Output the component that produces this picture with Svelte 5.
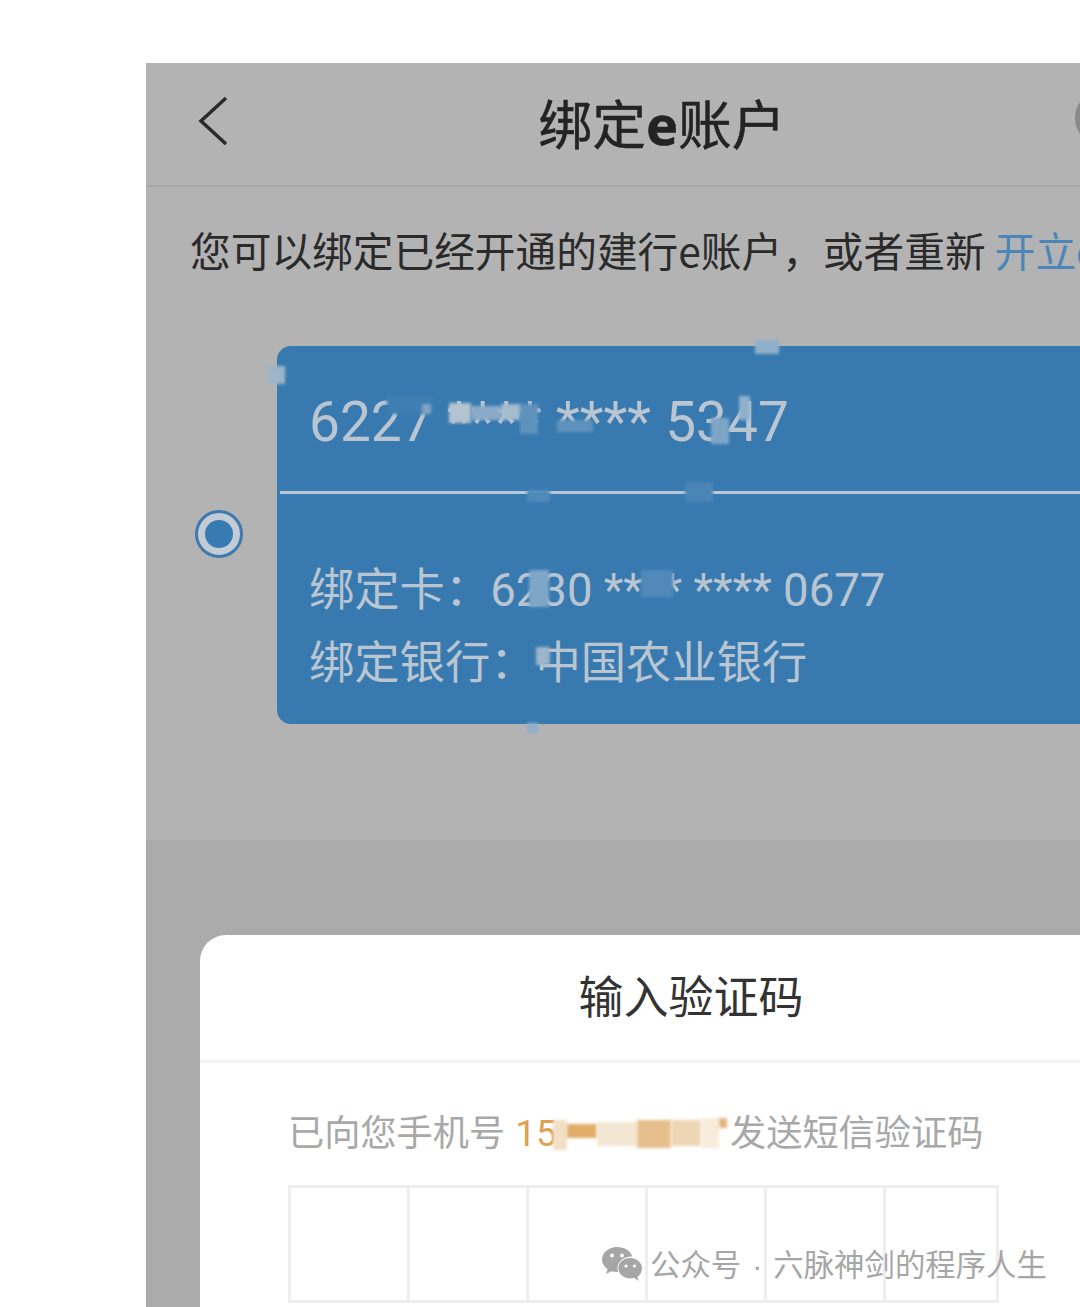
<script>
  // blur blocks that hide parts of the numbers, [x, y, w, h, colour] relative to the card
  const cardPatches = [
    [-9, 20, 17, 18, '#9db5c9'],
    [478, -6, 24, 14, '#8fb0cb'],
    [110, 50, 46, 18, '#3f7eb2'],
    [145, 58, 9, 10, '#7fa5c6'],
    [172, 57, 22, 20, '#b4c3d0'],
    [194, 60, 30, 14, '#8aabc8'],
    [224, 58, 20, 16, '#a5bccf'],
    [243, 58, 18, 30, '#5e92bc'],
    [280, 74, 36, 12, '#5e92bc'],
    [434, 72, 18, 26, '#7ea6c6'],
    [462, 50, 11, 24, '#8fb0cb'],
    [250, 144, 23, 12, '#4f8aba'],
    [408, 136, 28, 20, '#4a86b7'],
    [252, 224, 20, 37, '#7ea6c6'],
    [364, 224, 32, 27, '#4f8aba'],
    [259, 301, 14, 18, '#9db5c9'],
    [250, 377, 11, 10, '#8fb0cb']
  ];
  const phonePatches = [
    [0, 8, 14, 30, '#f2e0c6'],
    [14, 12, 30, 14, '#e0ae6a'],
    [44, 10, 40, 24, '#f3e6d2'],
    [84, 8, 34, 28, '#e6c08c'],
    [118, 8, 30, 26, '#eed6b4'],
    [148, 6, 18, 30, '#f7ecdc'],
    [166, 6, 8, 10, '#e3b880']
  ];
  const cells = [1, 2, 3, 4, 5, 6];
</script>

<div class="page">
  <section class="phone">
    <header class="nav">
      <svg class="back" viewBox="0 0 32 50" width="32" height="50" aria-hidden="true">
        <path d="M29 2 L4 25 L29 48" fill="none" stroke="#2b2b2b" stroke-width="3.500" />
      </svg>
      <h1>绑定<b>e</b>账户</h1>
      <span class="help"></span>
    </header>

    <div class="content">
      <p class="intro">您可以绑定已经开通的建行e账户，或者重新 <span>开立e账户</span></p>
      <div class="row">
        <span class="radio"><span></span></span>
        <div class="card">
          <div class="card-no">6227 **** **** 5347</div>
          <div class="card-info">
            <p class="bound">绑定卡：<span>6230 **** **** 0677</span></p>
            <p>绑定银行：中国农业银行</p>
          </div>
          {#each cardPatches as [x, y, w, h, c]}
            <i class="patch" style="left:{x}px;top:{y}px;width:{w}px;height:{h}px;background:{c}"></i>
          {/each}
        </div>
      </div>
    </div>

    <div class="lower">
      <div class="modal">
        <h2>输入验证码</h2>
        <div class="modal-body">
          <p class="sent">已向您手机号 <span class="tel">15
            {#each phonePatches as [x, y, w, h, c]}
              <i class="patch" style="left:{x + 38}px;top:{y}px;width:{w}px;height:{h}px;background:{c}"></i>
            {/each}
          </span> 发送短信验证码</p>
          <div class="code">
            {#each cells as n}
              <span data-n={n}></span>
            {/each}
          </div>
        </div>
      </div>
    </div>
  </section>

  <div class="mark">
    <svg viewBox="0 0 42 36" width="42" height="36" aria-hidden="true">
      <path d="M16 1C7.600 1 1 6.700 1 13.600c0 4 2.200 7.400 5.600 9.700L5 28l5.400-2.800c1.800.5 3.700.8 5.600.8h1.100c-.4-1.200-.6-2.400-.6-3.600 0-6.600 6.200-11.800 13.700-11.800h1.100C29.900 5 23.500 1 16 1z" fill="#a6a6a6" />
      <path d="M41 22.200c0-5.700-5.500-10.200-11.800-10.200-6.600 0-11.900 4.500-11.900 10.200s5.300 10.200 11.900 10.200c1.400 0 2.700-.2 3.900-.6L37.500 35l-1.100-4.100c2.800-2 4.600-5 4.600-8.700z" fill="#a6a6a6" />
      <circle cx="11" cy="9.500" r="1.900" fill="#fff" />
      <circle cx="21" cy="9.500" r="1.900" fill="#fff" />
      <circle cx="25" cy="20" r="1.600" fill="#fff" />
      <circle cx="33.500" cy="20" r="1.600" fill="#fff" />
    </svg>
    <span>公众号<em>·</em>六脉神剑的程序人生</span>
  </div>
</div>

<style>
  :global(body) {
    margin: 0;
    background: #fff;
  }
  .page {
    position: relative;
    width: 1080px;
    height: 1307px;
    overflow: hidden;
    box-sizing: border-box;
    padding: 63px 0 0 146px;
    font-family: "Noto Sans CJK SC", "Noto Sans", Roboto, sans-serif;
  }
  .phone {
    width: 1032px;
    height: 1244px;
    background: #b3b3b3;
    display: flex;
    flex-direction: column;
  }

  .nav {
    position: relative;
    flex: none;
    height: 122px;
    border-bottom: 2px solid #a9a9a9;
    display: flex;
    align-items: center;
    justify-content: center;
  }
  .back {
    position: absolute;
    left: 51px;
    top: 33px;
  }
  h1 {
    margin: 0 0 2px;
    font-size: 53.800px;
    line-height: 1;
    font-weight: 400;
    color: #232323;
    -webkit-text-stroke: 0.5px #232323;
  }
  h1 b {
    font-family: "Noto Sans", sans-serif;
    font-weight: 700;
  }
  .help {
    position: absolute;
    left: 929px;
    top: 28px;
    width: 44px;
    height: 44px;
    border: 5px solid #8a8a8a;
    border-radius: 50%;
  }

  .content {
    flex: none;
    height: 653px;
    box-sizing: border-box;
    padding: 39px 0 0 44px;
  }
  .intro {
    margin: 0;
    font-size: 40.700px;
    line-height: 48px;
    color: #2a2a2a;
    white-space: nowrap;
  }
  .intro span {
    color: #4a87b8;
  }
  .row {
    display: flex;
    align-items: center;
    gap: 34px;
    margin-top: 72px;
    margin-left: 5px;
  }
  .radio {
    flex: none;
    box-sizing: border-box;
    width: 48px;
    height: 48px;
    margin-bottom: 3px;
    border: 3px solid #3e7ab0;
    border-radius: 50%;
    display: flex;
    align-items: center;
    justify-content: center;
    background: #c3ccd5;
  }
  .radio span {
    width: 28px;
    height: 28px;
    border-radius: 50%;
    background: #387ab2;
  }
  .card {
    position: relative;
    width: 900px;
    height: 378px;
    background: #387ab0;
    border-radius: 14px 0 0 14px;
    color: #b9c5d0;
  }
  .card-no {
    height: 148px;
    margin-left: 3px;
    box-sizing: border-box;
    padding: 41px 0 0 29px;
    border-bottom: 3px solid #b9c8d6;
    font-family: Roboto, sans-serif;
    font-size: 55px;
    word-spacing: 0.700px;
    line-height: 70px;
    white-space: pre;
  }
  .card-info {
    padding: 58px 0 0 32px;
    font-size: 45.300px;
    line-height: 69px;
  }
  .card-info p {
    margin: 0;
    white-space: nowrap;
  }
  .bound span {
    font-family: Roboto, sans-serif;
    font-size: 45.500px;
  }
  .patch {
    position: absolute;
    display: block;
    filter: blur(1.500px);
  }

  .lower {
    flex: 1;
    background: #ababab;
    padding: 95px 0 0 54px;
    overflow: hidden;
  }
  .modal {
    width: 982px;
    height: 400px;
    background: #fff;
    border-radius: 26px 26px 0 0;
  }
  h2 {
    margin: 0;
    height: 125px;
    border-bottom: 3px solid #f2f2f2;
    font-size: 45px;
    line-height: 119px;
    font-weight: 400;
    color: #333;
    text-align: center;
  }
  .modal-body {
    padding: 43px 0 0 88px;
  }
  .sent {
    margin: 0;
    font-size: 36.200px;
    line-height: 48px;
    color: #a8a8a8;
    white-space: nowrap;
  }
  .tel {
    position: relative;
    font-family: Roboto, sans-serif;
    color: #e0a050;
    margin-left: 2px;
    padding-right: 164px;
    font-size: 37px;
  }
  .code {
    display: grid;
    grid-template-columns: 116px repeat(4, 119px) 1fr;
    box-sizing: border-box;
    width: 711px;
    height: 118px;
    margin-top: 27px;
    border: 3px solid #eee;
  }
  .code span + span {
    border-left: 3px solid #eee;
  }

  .mark {
    position: absolute;
    left: 601px;
    top: 1245px;
    display: flex;
    align-items: center;
    gap: 7px;
    font-size: 30.400px;
    line-height: 36px;
    color: #a6a6a6;
    white-space: nowrap;
  }
  .mark em {
    font-family: "Liberation Sans", sans-serif;
    font-style: normal;
    margin: 0 11px;
  }
</style>
